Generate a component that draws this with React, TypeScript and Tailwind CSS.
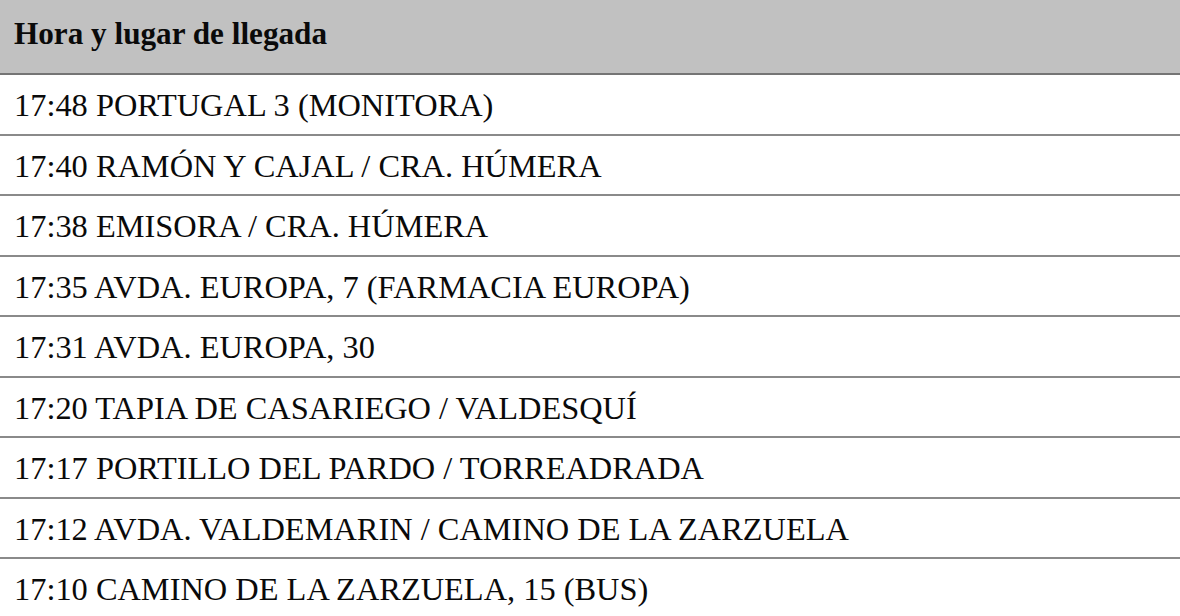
const stops = [
  "17:48 PORTUGAL 3 (MONITORA)",
  "17:40 RAMÓN Y CAJAL / CRA. HÚMERA",
  "17:38 EMISORA / CRA. HÚMERA",
  "17:35 AVDA. EUROPA, 7 (FARMACIA EUROPA)",
  "17:31 AVDA. EUROPA, 30",
  "17:20 TAPIA DE CASARIEGO / VALDESQUÍ",
  "17:17 PORTILLO DEL PARDO / TORREADRADA",
  "17:12 AVDA. VALDEMARIN / CAMINO DE LA ZARZUELA",
  "17:10 CAMINO DE LA ZARZUELA, 15 (BUS)",
];

export default function App() {
  return (
    <div className="w-[1180px] h-[616px] overflow-hidden bg-white text-[#0a0a0a] font-['Liberation_Serif','Times_New_Roman',serif] text-[32.4px]">
      <div className="h-[75px] flex items-center pl-[14px] pb-[4px] bg-[#c1c1c1] border-b-2 border-[#757575] font-bold text-[31.2px]">
        Hora y lugar de llegada
      </div>
      {stops.map((s) => (
        <div key={s} className="h-[60.5px] shrink-0 flex items-center pl-[14px] pt-[3px] border-b-2 border-[#8a8a8a]">
          {s}
        </div>
      ))}
    </div>
  );
}
